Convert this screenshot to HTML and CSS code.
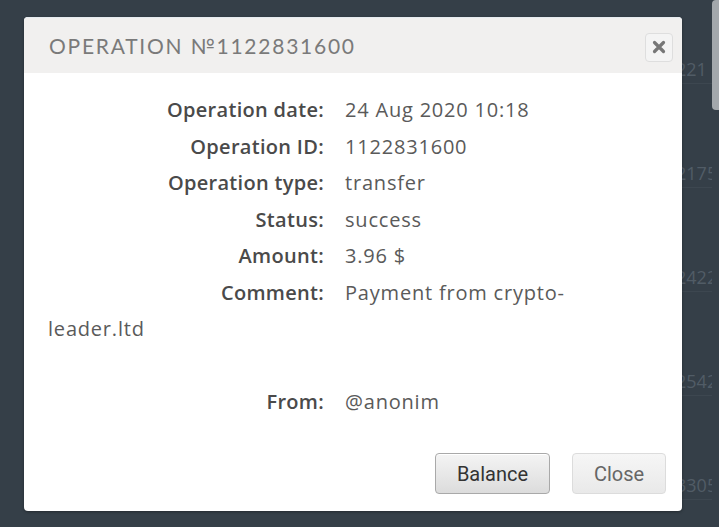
FILE: index.html
```html
<!DOCTYPE html>
<html>
<head>
<meta charset="utf-8">
<link rel="stylesheet" href="styles.css">
</head>
<body>
<div class="page">
  <ul class="bg-list">
    <li>221</li>
    <li>2175</li>
    <li>2422</li>
    <li>2542</li>
    <li>3305</li>
  </ul>
  <div class="scrollbar"></div>
  <div class="dialog">
    <div class="dialog-head">
      <h1 class="dialog-title">OPERATION №1122831600</h1>
      <button class="x-btn" aria-label="close">
        <svg width="14" height="14" viewBox="0 0 14 14"><path d="M2.5 2.5 L11.5 11.5 M11.5 2.5 L2.5 11.5" stroke="#777" stroke-width="3.2" stroke-linecap="round"/></svg>
      </button>
    </div>
    <div class="dialog-body">
      <span class="lbl">Operation date:</span><span class="val">24 Aug 2020 10:18</span><br>
      <span class="lbl">Operation ID:</span><span class="val">1122831600</span><br>
      <span class="lbl">Operation type:</span><span class="val">transfer</span><br>
      <span class="lbl">Status:</span><span class="val">success</span><br>
      <span class="lbl">Amount:</span><span class="val">3.96 $</span><br>
      <span class="lbl">Comment:</span><span class="val">Payment from crypto-<br>leader.ltd</span><br>
      <br>
      <span class="lbl">From:</span><span class="val">@anonim</span>
    </div>
    <div class="dialog-foot">
      <button class="btn btn-primary">Balance</button>
      <button class="btn btn-light">Close</button>
    </div>
  </div>
</div>
</body>
</html>
```
FILE: styles.css
```css
html, body {
  margin: 0;
  padding: 0;
}
body {
  background: #353f48;
  width: 719px;
  height: 527px;
  overflow: hidden;
  font-family: "Open Sans", "Noto Sans", sans-serif;
}
.page {
  position: relative;
  width: 719px;
  height: 527px;
}
.bg-list {
  list-style: none;
  margin: 0;
  padding: 56px 0 0 0;
  width: 712px;
  overflow: hidden;
  display: flex;
  flex-direction: column;
  align-items: flex-end;
  gap: 76px;
}
.bg-list li {
  font-family: "Open Sans", sans-serif;
  font-size: 18px;
  line-height: 26px;
  color: #515c66;
  width: 60px;
  text-align: left;
  white-space: nowrap;
  margin-right: -24px;
  padding-bottom: 1px;
  border-bottom: 1px solid #3d4750;
}
.scrollbar {
  position: absolute;
  right: 0;
  top: 0;
  width: 7px;
  height: 110px;
  background: #a3a8ac;
  border-radius: 4px 0 0 4px;
}
.dialog {
  position: absolute;
  left: 24px;
  top: 17px;
  width: 658px;
  height: 494px;
  background: #ffffff;
  border-radius: 4px;
  box-shadow: 0 1px 3px rgba(0,0,0,0.35);
  display: flex;
  flex-direction: column;
}
.dialog-head {
  height: 56px;
  background: #f1f0ef;
  border-radius: 4px 4px 0 0;
  border-top: 1px solid #e6ebf0;
  box-sizing: border-box;
  display: flex;
  align-items: center;
  justify-content: space-between;
  padding: 0 9px 0 25px;
}
.dialog-title {
  margin: 0;
  font-family: "Lato", sans-serif;
  font-weight: 400;
  font-size: 21px;
  letter-spacing: 1.75px;
  color: #7a7a7a;
}
.x-btn {
  width: 28px;
  height: 29px;
  border: 1px solid #dedede;
  border-radius: 4px;
  background: #f4f4f4;
  display: flex;
  align-items: center;
  justify-content: center;
  padding: 0;
  margin-top: 3px;
}
.dialog-body {
  padding: 19px 24px 0 24px;
  font-size: 20px;
  line-height: 36.5px;
  letter-spacing: 0.8px;
  color: #595959;
}
.lbl {
  display: inline-block;
  width: 276px;
  text-align: right;
  color: #4a4a4a;
  font-weight: 600;
  letter-spacing: 0.3px;
}
.val {
  padding-left: 21px;
  color: #5a5a5a;
}
.dialog-foot {
  margin-top: auto;
  display: flex;
  justify-content: flex-end;
  gap: 22px;
  padding: 0 16px 17px 0;
}
.btn {
  height: 41px;
  border-radius: 4px;
  font-family: "Roboto", "Liberation Sans", sans-serif;
  font-size: 20px;
  padding: 0;
}
.btn-primary {
  width: 115px;
  border: 1px solid #a9a9a9;
  background: linear-gradient(#f4f4f4, #dcdcdc);
  color: #333;
  box-shadow: inset 0 1px 0 #fff;
}
.btn-light {
  width: 94px;
  border: 1px solid #dcdcdc;
  background: linear-gradient(#f6f6f6, #e9e9e9);
  color: #666;
}
```
